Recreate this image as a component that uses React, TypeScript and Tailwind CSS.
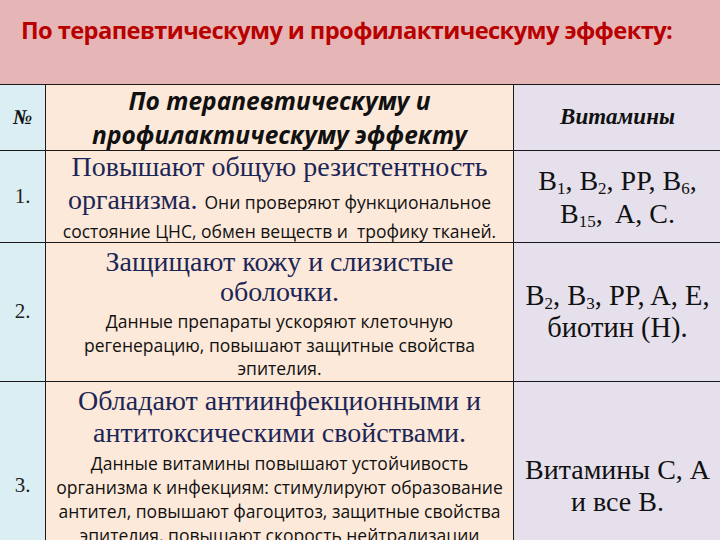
export default function App() {
  const serif = "font-['Liberation_Serif',serif]"
  const sans = "font-['Open_Sans',sans-serif]"

  return (
    <div className="w-[720px] h-[540px] overflow-hidden bg-[#e6b5b5]">
      {/* Title */}
      <div className="h-[84px] pl-[21px] pt-[13px]">
        <h1 className={`${sans} text-[23.7px] font-bold text-[#b80000] leading-[34px] tracking-[-0.6px]`}>
          По терапевтическуму и профилактическуму эффекту:
        </h1>
      </div>

      {/* Table */}
      <div className="grid grid-cols-[45px_467px_207px] gap-px bg-[#1a1a1a] pt-px">
        {/* header row */}
        <div className="bg-[#daeef3] h-[65px] flex items-center justify-center">
          <span className={`${serif} italic font-bold text-[21px] text-[#111]`}>№</span>
        </div>
        <div className="bg-[#fde9d9] h-[65px] flex flex-col items-center justify-center">
          <p className={`${sans} italic font-bold text-[24.5px] leading-[34px] text-[#111] text-center`}>
            По терапевтическуму и
            <br />
            профилактическуму эффекту
          </p>
        </div>
        <div className="bg-[#e5e0ec] h-[65px] flex items-center justify-center">
          <span className={`${serif} italic font-bold text-[23px] text-[#111]`}>Витамины</span>
        </div>

        {/* row 1 */}
        <div className="bg-[#daeef3] h-[91px] flex items-center justify-center">
          <span className={`${serif} text-[21px] text-[#222]`}>1.</span>
        </div>
        <div className="bg-[#fde9d9] h-[91px] flex flex-col items-center justify-center">
          <p className={`${serif} text-[28px] leading-[33px] text-[#1c2656] text-center`}>
            Повышают общую резистентность
            <br />
            организма.{" "}
            <span className={`${sans} text-[17.5px] text-[#111]`}>Они проверяют функциональное</span>
          </p>
          <p className={`${sans} text-[17.5px] leading-[24px] text-[#111] text-center`}>
            состояние ЦНС, обмен веществ и&nbsp; трофику тканей.
          </p>
        </div>
        <div className="bg-[#e5e0ec] h-[91px] flex flex-col items-center justify-center">
          <p className={`${serif} text-[28px] leading-[33px] text-[#111] text-center`}>
            B<sub className="text-[17px]">1</sub>, B<sub className="text-[17px]">2</sub>, PP, B<sub className="text-[17px]">6</sub>,
            <br />
            B<sub className="text-[17px]">15</sub>,&nbsp; A, C.
          </p>
        </div>

        {/* row 2 */}
        <div className="bg-[#daeef3] h-[138px] flex items-center justify-center">
          <span className={`${serif} text-[21px] text-[#222]`}>2.</span>
        </div>
        <div className="bg-[#fde9d9] h-[138px] flex flex-col items-center pt-[4px]">
          <p className={`${serif} text-[28px] leading-[30px] text-[#1c2656] text-center`}>
            Защищают кожу и слизистые
            <br />
            оболочки.
          </p>
          <p className={`${sans} text-[17.5px] leading-[23.5px] text-[#111] text-center mt-[3px]`}>
            Данные препараты ускоряют клеточную
            <br />
            регенерацию, повышают защитные свойства
            <br />
            эпителия.
          </p>
        </div>
        <div className="bg-[#e5e0ec] h-[138px] flex flex-col items-center justify-center">
          <p className={`${serif} text-[28.5px] leading-[32px] text-[#111] text-center`}>
            B<sub className="text-[17px]">2</sub>, B<sub className="text-[17px]">3</sub>, PP, A, E,
            <br />
            биотин (H).
          </p>
        </div>

        {/* row 3 */}
        <div className="bg-[#daeef3] h-[208px] flex items-center justify-center">
          <span className={`${serif} text-[21px] text-[#222]`}>3.</span>
        </div>
        <div className="bg-[#fde9d9] h-[208px] flex flex-col items-center pt-[3px]">
          <p className={`${serif} text-[28px] leading-[32px] text-[#1c2656] text-center`}>
            Обладают антиинфекционными и
            <br />
            антитоксическими свойствами.
          </p>
          <p className={`${sans} text-[17.5px] leading-[24px] text-[#111] text-center mt-[2px]`}>
            Данные витамины повышают устойчивость
            <br />
            организма к инфекциям: стимулируют образование
            <br />
            антител, повышают фагоцитоз, защитные свойства
            <br />
            эпителия, повышают скорость нейтрализации
            <br />
            токсинов.
          </p>
        </div>
        <div className="bg-[#e5e0ec] h-[208px] flex flex-col items-center justify-center">
          <p className={`${serif} text-[28px] leading-[32px] text-[#111] text-center`}>
            Витамины С, А
            <br />
            и все В.
          </p>
        </div>
      </div>
    </div>
  )
}
